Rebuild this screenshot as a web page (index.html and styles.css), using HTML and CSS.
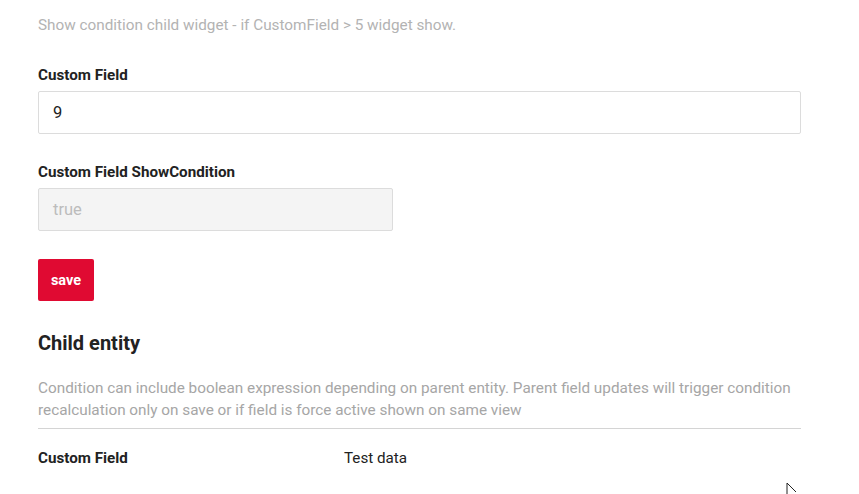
FILE: index.html
```html
<!DOCTYPE html>
<html>
<head>
<meta charset="utf-8">
<link rel="stylesheet" href="styles.css">
</head>
<body>
<main class="page">
  <p class="hint">Show condition child widget - if CustomField &gt; 5 widget show.</p>

  <div class="field">
    <label class="label">Custom Field</label>
    <div class="input">9</div>
  </div>

  <div class="field">
    <label class="label">Custom Field ShowCondition</label>
    <div class="input input-disabled">true</div>
  </div>

  <button class="btn-save">save</button>

  <h2 class="section-title">Child entity</h2>
  <p class="section-desc">Condition can include boolean expression depending on parent entity. Parent field updates will trigger condition recalculation only on save or if field is force active shown on same view</p>

  <div class="data-row">
    <span class="data-label">Custom Field</span>
    <span class="data-value">Test data</span>
  </div>
</main>
<svg class="cursor" width="14" height="14" viewBox="0 0 14 14"><path d="M1 1 L1 12 M1 1 L10 10" stroke="#222" stroke-width="1" fill="none"/></svg>
</body>
</html>
```
FILE: styles.css
```css
* { box-sizing: border-box; }
html, body { margin: 0; padding: 0; background: #fff; }
body {
  font-family: Roboto, "Noto Sans", sans-serif;
  color: #222;
  overflow: hidden;
  height: 494px;
  position: relative;
}
.page {
  width: 763px;
  margin-left: 38px;
  padding-top: 15px;
  display: flex;
  flex-direction: column;
  align-items: flex-start;
}
.hint {
  margin: 0;
  font-size: 15.3px;
  line-height: 20px;
  color: #b3b3b3;
}
.field {
  width: 100%;
  display: flex;
  flex-direction: column;
  margin-top: 30px;
}
.field + .field { margin-top: 28px; }
.label {
  font-size: 15.2px;
  font-weight: 700;
  line-height: 20px;
  color: #222;
  margin-bottom: 6px;
}
.input {
  width: 100%;
  height: 43px;
  border: 1px solid #dcdcdc;
  border-radius: 2px;
  padding: 0 14px;
  font-size: 16.5px;
  line-height: 41px;
  color: #222;
}
.input-disabled {
  width: 355px;
  background: #f4f4f4;
  color: #bcbcbc;
}
.btn-save {
  margin-top: 28px;
  width: 56px;
  height: 42px;
  border: none;
  border-radius: 2px;
  background: #e00a32;
  color: #fff;
  font-family: Roboto, sans-serif;
  font-size: 14.5px;
  font-weight: 700;
  padding: 0;
}
.section-title {
  margin: 28px 0 0;
  font-size: 20px;
  font-weight: 700;
  line-height: 28px;
  color: #222;
}
.section-desc {
  margin: 20px 0 0;
  font-size: 15.3px;
  line-height: 22px;
  color: #a6a6a6;
  width: 100%;
  padding-bottom: 7px;
  border-bottom: 1px solid #d4d4d4;
}
.data-row {
  display: flex;
  width: 100%;
  margin-top: 19px;
  font-size: 15.2px;
  line-height: 20px;
}
.data-label {
  width: 306px;
  font-weight: 700;
  color: #222;
}
.data-value {
  color: #222;
}
.cursor {
  position: absolute;
  left: 786px;
  top: 482px;
}
```
